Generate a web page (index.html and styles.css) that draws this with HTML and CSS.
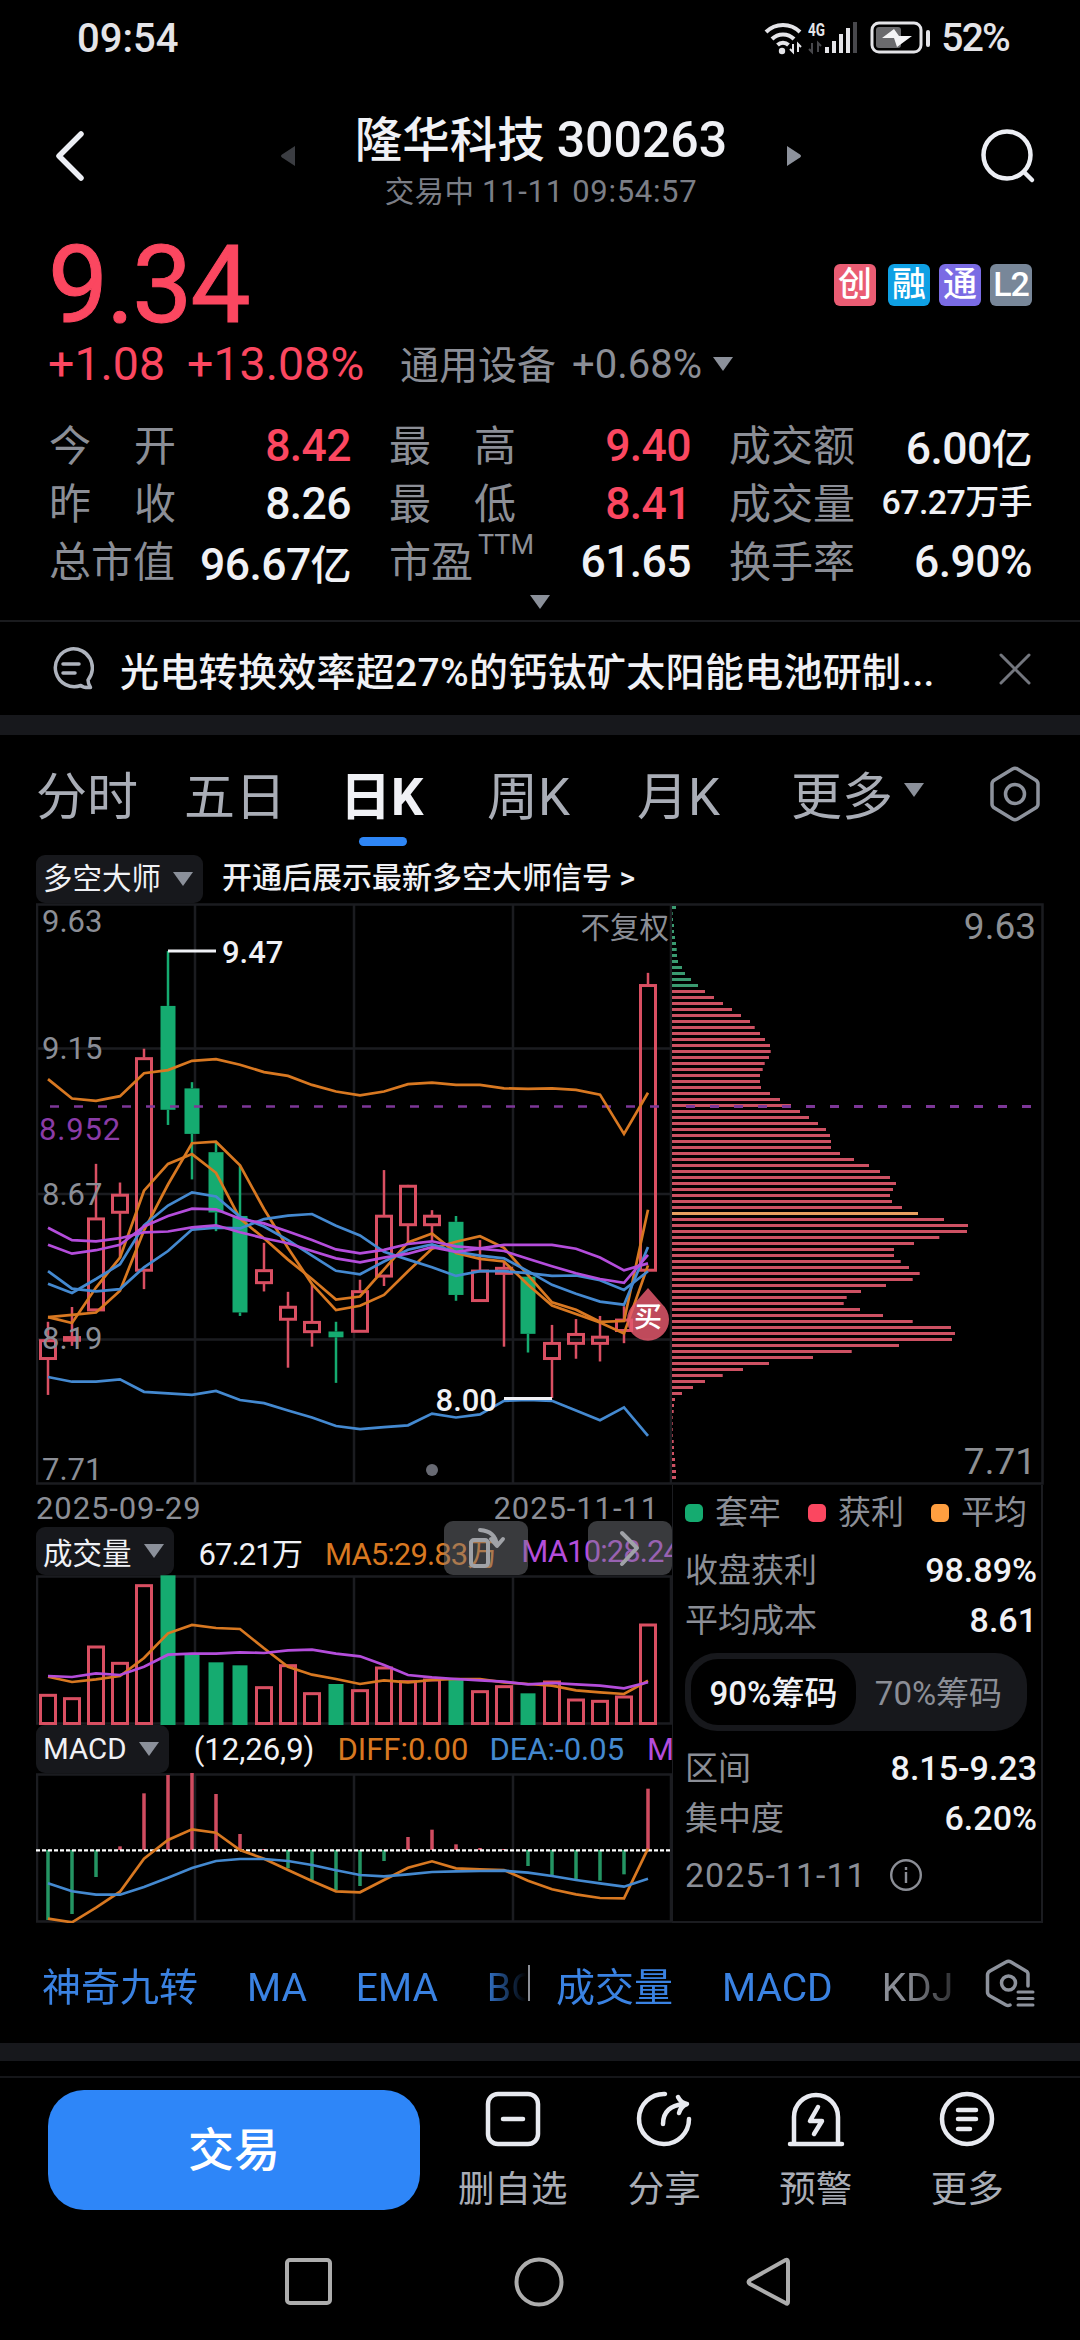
FILE: index.html
```html
<!DOCTYPE html>
<html lang="zh-CN">
<head>
	<meta charset="utf-8">
	<title>隆华科技 300263</title>
	<link rel="stylesheet" href="styles.css">
</head>
<body>

<div class="status">
	<span class="clock">09:54</span>
	<svg class="wifi" width="40" height="34" viewBox="0 0 40 34" fill="none" stroke="#e4e4e8" stroke-width="4">
		<path d="M2 11a24 24 0 0 1 34 0M8 18a15.500 15.500 0 0 1 22 0M13.500 24a8 8 0 0 1 11 0"/>
		<circle cx="18" cy="30" r="3.200" fill="#e4e4e8" stroke="none"/>
		<path d="M29 23v8l-3-3M34 31v-8l3 3" stroke-width="2"/>
	</svg>
	<svg class="signal" width="52" height="34" viewBox="0 0 52 34">
		<text x="0" y="15" class="net" textLength="17" lengthAdjust="spacingAndGlyphs">4G</text>
		<path d="M4 22v9l-3-3M10 31v-9l3 3" stroke="#48484c" stroke-width="2" fill="none"/>
		<g fill="#e4e4e8"><rect x="17" y="26" width="4" height="6"/><rect x="24" y="20" width="4" height="12"/><rect x="31" y="13" width="4" height="19"/><rect x="38" y="7" width="4" height="25"/></g>
		<rect x="45" y="1" width="4" height="31" fill="#48484c"/>
	</svg>
	<svg class="battery" width="62" height="34" viewBox="0 0 62 34">
		<rect x="2" y="2" width="49" height="29" rx="7" fill="none" stroke="#e4e4e8" stroke-width="3"/>
		<rect x="6" y="6" width="25" height="21" rx="3" fill="#6a6a6d"/>
		<path d="M24 8L12 17h12l3 9 15-11H29z" fill="#f4f4f6"/>
		<rect x="56" y="9" width="4" height="17" rx="2" fill="#e4e4e8"/>
	</svg>
	<span class="level">52%</span>
</div>

<div class="header">
	<svg class="back" width="34" height="54" viewBox="0 0 34 54"><path d="M27 5L5 27l22 22" fill="none" stroke="#eceef4" stroke-width="5.500" stroke-linecap="round" stroke-linejoin="round"/></svg>
	<svg class="prev" width="14" height="20" viewBox="0 0 14 20"><path d="M14 0v20L1 11.500q-2-1.500 0-3z" fill="#3b3d42"/></svg>
	<div class="name">
		<div class="title">隆华科技 <span>300263</span></div>
		<div class="time">交易中 <span>11-11 09:54:57</span></div>
	</div>
	<svg class="next" width="14" height="20" viewBox="0 0 14 20"><path d="M0 0v20l13-8.500q2-1.500 0-3z" fill="#8d929c"/></svg>
	<svg class="search" width="56" height="56" viewBox="0 0 56 56" fill="none" stroke="#eceef4" stroke-width="4.500" stroke-linecap="round"><circle cx="27" cy="27" r="23.500"/><path d="M44 44l8 8"/></svg>
</div>

<div class="quote">
	<div class="price">9.34</div>
	<div class="badges">
		<i class="red">创</i><i class="blue">融</i><i class="violet">通</i><i class="slate">L2</i>
	</div>
</div>
<div class="change">
	<span class="up">+1.08</span><span class="up pct">+13.08%</span>
	<span class="sector">通用设备</span><span class="spct">+0.68%</span><b class="tri"></b>
</div>

<div class="stats">
	<div><label><i>今</i><i>开</i></label><b class="up">8.42</b></div>
	<div><label><i>最</i><i>高</i></label><b class="up">9.40</b></div>
	<div><label>成交额</label><b>6.00<u>亿</u></b></div>
	<div><label><i>昨</i><i>收</i></label><b>8.26</b></div>
	<div><label><i>最</i><i>低</i></label><b class="up">8.41</b></div>
	<div><label>成交量</label><b class="small">67.27万手</b></div>
	<div><label>总市值</label><b>96.67<u>亿</u></b></div>
	<div><label class="pe">市盈<sup>TTM</sup></label><b>61.65</b></div>
	<div><label>换手率</label><b>6.90%</b></div>
</div>
<div class="expand"><b class="tri"></b></div>

<div class="news">
	<svg width="44" height="44" viewBox="0 0 44 44" fill="none" stroke="#aeb3bd" stroke-width="3.500" stroke-linecap="round" stroke-linejoin="round"><path d="M21 2a19 19 0 1 0 10 36.500q2.500 2.500 9.500 2-2.500-4-2.500-7.500A19 19 0 0 0 21 2z"/><path d="M13 17h16M13 26h12"/></svg>
	<span>光电转换效率超27%的钙钛矿太阳能电池研制...</span>
	<svg class="close" width="32" height="32" viewBox="0 0 32 32"><path d="M2 2l28 28M30 2L2 30" stroke="#73767e" stroke-width="3" stroke-linecap="round"/></svg>
</div>
<div class="band"></div>

<div class="tabs">
	<span>分时</span><span>五日</span><span class="on">日K</span><span>周K</span><span>月K</span>
	<span>更多<b class="tri"></b></span>
	<svg width="52" height="56" viewBox="0 0 52 56" fill="none" stroke="#8d929c" stroke-width="3.500" stroke-linejoin="round"><path d="M23.500 3q2.500-1.500 5 0l18 11q2.500 1.500 2.500 4v20q0 2.500-2.500 4l-18 11q-2.500 1.500-5 0l-18-11Q3 40.500 3 38V18q0-2.500 2.500-4z"/><circle cx="26" cy="28" r="9.500"/></svg>
</div>

<div class="signalbar">
	<span class="pill">多空大师<b class="tri"></b></span>
	<span class="hint">开通后展示最新多空大师信号 &gt;</span>
</div>

<div class="board">
	<div class="left">
		<svg id="kline" width="636" height="582"></svg>
		<div class="dates"><span>2025-09-29</span><span>2025-11-11</span></div>
		<div class="legend vol">
			<div class="strip">
				<span class="pill">成交量<b class="tri"></b></span>
				<span class="v1">67.21万</span><span class="orange v2">MA5:29.83万</span><span class="purple v3">MA10:28.24</span>
			</div>
			<div class="float rotate">
				<svg width="40" height="42" viewBox="0 0 40 42" fill="none" stroke="#a0a2a7" stroke-width="4" stroke-linecap="round" stroke-linejoin="round"><rect x="5" y="13" width="17" height="26" rx="3"/><path d="M14 3q15 1 17 15M25 12l6 7 6-7"/></svg>
			</div>
			<div class="float">
				<svg width="24" height="40" viewBox="0 0 24 40" fill="none" stroke="#a0a2a7" stroke-width="4" stroke-linecap="round" stroke-linejoin="round"><path d="M4 5l15 15L4 36"/></svg>
			</div>
		</div>
		<svg id="volume" width="636" height="150"></svg>
		<div class="legend">
			<div class="strip">
				<span class="pill">MACD<b class="tri"></b></span>
				<span class="m1">(12,26,9)</span><span class="orange m2">DIFF:0.00</span><span class="azure m3">DEA:-0.05</span><span class="purple m4">M</span>
			</div>
		</div>
		<svg id="macd" width="636" height="150"></svg>
	</div>
	<div class="right">
		<svg id="chips" width="372" height="582"></svg>
		<div class="panel">
			<div class="keys"><span><i class="g"></i>套牢</span><span><i class="r"></i>获利</span><span><i class="y"></i>平均</span></div>
			<div class="row">收盘获利<b>98.89%</b></div>
			<div class="row">平均成本<b>8.61</b></div>
			<div class="toggle"><span class="on">90%筹码</span><span>70%筹码</span></div>
			<div class="row">区间<b>8.15-9.23</b></div>
			<div class="row">集中度<b>6.20%</b></div>
			<div class="day">2025-11-11
				<svg width="34" height="34" viewBox="0 0 34 34" fill="none" stroke="#8b8e96" stroke-width="2.400"><circle cx="17" cy="17" r="14.800"/><path d="M17 14v11M17 9v3"/></svg>
			</div>
		</div>
	</div>
</div>

<div class="studies">
	<div class="group first"><span>神奇九转</span><span>MA</span><span>EMA</span><span>BO</span></div>
	<div class="sep"></div>
	<div class="group second"><span>成交量</span><span>MACD</span><span class="off">KDJ</span></div>
	<svg width="52" height="50" viewBox="0 0 52 50" fill="none" stroke="#8d929c" stroke-width="3.500" stroke-linecap="round" stroke-linejoin="round"><path d="M43 27V15q0-2-2-3L26 3q-2.500-1.500-5 0L5 12q-2.500 1.500-2.500 4v17q0 2.500 2.500 4l16 9q2 1 4 0"/><circle cx="23.500" cy="24" r="7"/><path d="M33 33h15M33 39.500h15M33 46h15" stroke-width="3"/></svg>
</div>
<div class="band thin"></div>

<div class="actions">
	<div class="trade">交易</div>
	<div class="act">
		<svg width="58" height="58" viewBox="0 0 58 58"><rect x="4" y="4" width="50" height="50" rx="10"/><path d="M19 29h20"/></svg>删自选
	</div>
	<div class="act">
		<svg width="58" height="58" viewBox="0 0 58 58"><path d="M30 4A25 25 0 1 0 54 29"/><path d="M28 34q0-18 21-20M43 7q3 6 9 7-6 2-8 9"/></svg>分享
	</div>
	<div class="act">
		<svg width="58" height="58" viewBox="0 0 58 58"><path d="M7 53V27a22 22 0 0 1 44 0v26M3 54h52"/><path d="M31 17l-8 14h12l-8 13"/></svg>预警
	</div>
	<div class="act">
		<svg width="58" height="58" viewBox="0 0 58 58"><circle cx="29" cy="29" r="25"/><path d="M20 20h18M20 29h18M20 39h12"/></svg>更多
	</div>
</div>

<div class="nav">
	<svg width="50" height="54" viewBox="0 0 50 54"><rect x="3" y="5" width="43" height="43" rx="3"/></svg>
	<svg width="54" height="54" viewBox="0 0 54 54"><circle cx="27" cy="27" r="22.500"/></svg>
	<svg width="50" height="54" viewBox="0 0 50 54"><path d="M44 7v40q0 3-2.500 1L6 29q-3-2 0-4L41.500 5q2.500-1 2.500 2z"/></svg>
</div>

<script src="chart.js"></script>
</body>
</html>
```

FILE: chart.js
```js
var RED = '#d94f62', GREEN = '#15ab70', ORANGE = '#d87821', BLUE = '#4489d0', PURPLE = '#b44ddb', GRID = '#1b1c20';

// high, body top, body bottom, low, rising
var candles = [
	[1110,1156,1207,1298,1],[1072,1148,1160,1172,1],[704,843,1082,1082,1],[752,782,831,945,1],
	[408,431,980,1026,1],[157,298,565,604,0],[494,510,627,744,0],[650,674,829,877,0],
	[708,838,1086,1095,0],[907,976,1012,1032,1],[1033,1070,1106,1228,1],[1012,1109,1138,1174,1],
	[1110,1135,1150,1267,0],[1002,1030,1137,1137,1],[720,836,995,1018,1],[758,759,863,905,1],
	[823,836,863,905,1],[838,853,1041,1056,0],[900,977,1058,1058,1],[955,970,988,1174,1],
	[994,994,1141,1189,0],[1118,1163,1207,1306,1],[1103,1140,1168,1205,1],[1095,1147,1168,1212,1],
	[1070,1103,1135,1165,1],[213,243,980,980,1]
];

var lines = [
	[ORANGE, [486,536,542,530,471,463,439,435,449,468,478,501,518,528,518,499,495,501,501,510,511,510,514,526,627,521]],
	[BLUE, [1252,1264,1264,1258,1290,1294,1298,1288,1311,1319,1338,1356,1378,1386,1381,1376,1346,1356,1348,1313,1311,1313,1338,1363,1330,1403]],
	[ORANGE, [1098,1092,1086,1030,875,757,651,647,708,820,920,1013,1080,1069,1041,980,922,904,890,920,990,1060,1079,1110,1108,822]],
	[ORANGE, [1098,1113,1022,945,773,704,679,727,845,895,950,1000,1053,1045,975,906,883,933,948,955,1015,1068,1090,1112,1140,965]],
	[BLUE, [980,1025,1032,1026,970,928,873,868,870,846,837,833,863,888,930,950,970,992,980,980,985,992,991,1003,1028,980]],
	[BLUE, [1012,1036,1000,962,862,811,777,788,840,865,900,940,979,988,955,925,911,930,940,947,980,1015,1038,1058,1066,918]],
	[PURPLE, [868,900,903,895,880,878,867,862,880,895,908,928,947,957,945,935,918,930,922,928,948,967,985,1000,1010,938]],
	[PURPLE, [912,935,926,912,865,838,819,821,845,857,878,900,924,934,925,910,903,916,921,912,912,912,922,945,978,960]]
];

var vol = [643,653,498,547,314,286,524,547,556,620,554,638,612,629,561,602,597,598,632,617,640,603,657,661,648,432];
var vol5 = [590,606,598,588,534,460,435,444,447,505,560,584,597,612,601,607,600,597,597,607,612,617,631,637,642,602];
var vol10 = [588,591,580,585,560,524,521,521,517,519,511,509,521,529,555,585,592,597,601,605,613,609,613,617,625,607];

var bars = [1320,1302,1191,1099,940,885,879,942,1062,1107,1165,1200,1230,1218,1143,1071,1049,1093,1104,1107,1158,1188,1197,1202,1183,926];
var diff = [1316,1327,1283,1235,1136,1080,1048,1058,1110,1136,1170,1203,1234,1237,1200,1163,1144,1165,1168,1170,1202,1228,1243,1254,1255,1106];
var dea = [1210,1234,1244,1244,1221,1193,1164,1143,1137,1137,1143,1155,1171,1185,1189,1183,1176,1174,1173,1172,1178,1188,1200,1210,1220,1196];

var chips = [48,38,39,42,42,45,48,50,51,54,66,75,93,114,135,162,189,216,243,270,284,300,315,330,332,327,314,308,300,300,303,330,
	360,393,420,447,474,498,510,513,513,540,582,627,660,690,708,699,690,696,726,774,852,924,921,838,762,702,702,722,747,779,758,678,
	603,560,551,600,669,758,873,885,876,717,575,459,327,249,188,135,99,66,45,42,41,38,38,38,38,41,42,42,45,46,48,48];

function x(i) { return 12 + 24 * i; }
function py(v) { return v * 0.389 - 13; }
function vy(v) { return v / 3 - 95; }
function my(v) { return v / 3 - 293; }

function rect(x, y, w, h, fill, extra) {
	return '<rect x="' + x + '" y="' + y + '" width="' + w + '" height="' + h + '" fill="' + fill + '" ' + (extra || '') + '/>';
}
function line(x1, y1, x2, y2, color, w, extra) {
	return '<path d="M' + x1 + ' ' + y1 + 'L' + x2 + ' ' + y2 + '" stroke="' + color + '" stroke-width="' + w + '" ' + (extra || '') + '/>';
}
function poly(data, scale, color) {
	var p = data.map(function (v, i) { return x(i) + ',' + scale(v).toFixed(1); });
	return '<polyline points="' + p.join(' ') + '" fill="none" stroke="' + color + '" stroke-width="2.7"/>';
}
function text(x, y, s, cls, anchor) {
	return '<text x="' + x + '" y="' + y + '" class="' + cls + '" text-anchor="' + (anchor || 'start') + '">' + s + '</text>';
}
function frame(h) {
	var s = rect(1, 1.500, 634, h - 3, 'none', 'stroke="' + GRID + '" stroke-width="2.5"');
	[159, 318, 477].forEach(function (gx) { s += line(gx, 1, gx, h - 2, GRID, 2.5); });
	return s;
}

// candles
var s = frame(582);
[145.500, 291, 436.500].forEach(function (gy) { s += line(0, gy, 636, gy, GRID, 2.5); });
candles.forEach(function (c, i) {
	var t = py(c[1]), b = py(c[2]), col = c[4] ? RED : GREEN;
	s += line(x(i), py(c[0]), x(i), t, col, 2.5) + line(x(i), b, x(i), py(c[3]), col, 2.5);
	if (c[4]) s += rect(x(i) - 7.5, t + 1, 15, Math.max(b - t - 2, 2), 'none', 'stroke="' + RED + '" stroke-width="3"');
	else s += rect(x(i) - 7.5, t, 15, b - t, GREEN);
});
s += line(14, 203.500, 636, 203.500, '#7d3798', 2.5, 'stroke-dasharray="9 15"');
lines.forEach(function (l) { s += poly(l[1], py, l[0]); });
s += line(x(5), py(157), 180, py(157), '#f0f1f5', 3) + text(186, 60, '9.47', 'mark');
s += line(468, py(1307), x(21), py(1307), '#f0f1f5', 3) + text(461, 508, '8.00', 'mark', 'end');
s += text(6, 29, '9.63', 'axis') + text(6, 156, '9.15', 'axis') + text(6, 302, '8.67', 'axis') + text(6, 446, '8.19', 'axis') + text(6, 577, '7.71', 'axis');
s += text(3, 237, '8.952', 'axis cost') + text(633, 35, '不复权', 'adj', 'end');
s += '<circle cx="396" cy="567" r="6" fill="#686a73"/>';
s += '<path d="M612 385L626 401a21 21 0 1 1-28 0z" fill="#e3586c" fill-opacity=".84"/>' + text(612, 424, '买', 'buy', 'middle');
document.getElementById('kline').innerHTML = s;

// volume
s = frame(150);
vol.forEach(function (v, i) {
	var t = vy(v);
	if (candles[i][4]) s += rect(x(i) - 7.5, t + 1, 15, 147.500 - t, 'none', 'stroke="' + RED + '" stroke-width="3"');
	else s += rect(x(i) - 7.5, t, 15, 150 - t, GREEN);
});
s += poly(vol5, vy, ORANGE) + poly(vol10, vy, PURPLE);
document.getElementById('volume').innerHTML = s;

// macd
s = frame(150);
bars.forEach(function (v, i) { s += line(x(i), 77, x(i), my(v), v < 1110 ? '#d04c60' : '#249563', 3.5); });
s += line(0, 77.300, 636, 77.300, '#fff', 2.2, 'stroke-dasharray="4 2"');
s += poly(diff, my, ORANGE) + poly(dea, my, BLUE);
document.getElementById('macd').innerHTML = s;

// cost distribution
s = rect(-2, 1.500, 372.500, 579, 'none', 'stroke="' + GRID + '" stroke-width="2.5"');
chips.forEach(function (v, i) {
	s += rect(0, 3 + 6 * i, ((v - 36) / 3).toFixed(1), 3, i < 14 ? '#3a9a70' : i == 51 ? '#e8a060' : '#cd5163');
});
s += line(14, 203.500, 364, 203.500, '#7d3798', 3, 'stroke-dasharray="9 15"');
s += text(364, 36, '9.63', 'big', 'end') + text(364, 571, '7.71', 'big', 'end');
document.getElementById('chips').innerHTML = s;
```

FILE: styles.css
```css
* { box-sizing: border-box; }
body {
	margin: 0;
	width: 1080px;
	height: 2340px;
	overflow: hidden;
	background: #000;
	color: #f0f1f5;
	font-family: Roboto, "Noto Sans CJK SC", sans-serif;
	white-space: nowrap;
}
i, u { font-style: normal; text-decoration: none; }
svg { display: block; flex: none; }
.up { color: #fb4760; }
.tri {
	display: inline-block;
	border: 10.5px solid transparent;
	border-top: 14px solid #8b909a;
	border-bottom: 0;
}
.orange { color: #d87821; }
.purple { color: #b44ddb; }
.azure { color: #4489d0; }

/* status bar */
.status { display: flex; align-items: center; height: 76px; padding: 0 71px 0 77px; color: #e4e4e8; }
.clock { flex: 1; font-size: 40px; font-weight: 500; }
.signal { margin-left: 4px; }
.net { font-size: 18px; font-weight: 700; fill: #e4e4e8; }
.battery { margin: 0 9px 0 10px; }
.level { font-size: 39px; font-weight: 500; letter-spacing: -1.8px; }

/* title */
.header { display: flex; align-items: center; height: 160px; padding: 0 44px 0 54px; }
.prev { margin-left: 193px; }
.name { width: 492px; padding-top: 8px; text-align: center; }
.title { font-size: 47.500px; font-weight: 500; line-height: 62px; }
.title span { font-size: 50px; }
.time { font-size: 29.500px; line-height: 40px; color: #7b7e86; letter-spacing: .4px; }
.time span { font-size: 31px; letter-spacing: .7px; }
.search { margin-left: auto; }

/* price */
.quote { display: flex; justify-content: space-between; height: 94px; padding: 0 48px; }
.price { font-size: 107px; line-height: 100px; color: #fb4760; letter-spacing: -2px; -webkit-text-stroke: 1px #fb4760; }
.badges { display: flex; gap: 9px; padding-top: 28px; }
.badges i { width: 42px; height: 42px; border-radius: 6px; font-size: 34px; line-height: 40px; text-align: center; font-weight: 500; color: #fff; }
.badges .red { background: #ea5c73; margin-right: 3px; }
.badges .blue { background: #0fa0e4; }
.badges .violet { background: #7a6be4; }
.badges .slate { background: #788799; letter-spacing: -1px; }
.change { display: flex; align-items: center; height: 68px; padding-left: 48px; font-size: 46.500px; }
.change .up { width: 139px; }
.change .pct { width: 213px; }
.sector { margin-top: -4px; font-size: 39px; color: #8b8e96; }
.spct { margin-left: 16px; font-size: 40px; color: #8b8e96; }
.change .tri { margin: 0 0 0 11px; }

.stats { display: grid; grid-template-columns: 302px 302px 303px; column-gap: 38px; grid-auto-rows: 58px; padding: 17px 48px 0 49px; }
.stats div { display: flex; justify-content: space-between; align-items: center; }
.stats label { display: flex; justify-content: space-between; width: 127px; margin-top: -4px; font-size: 42px; color: #8b8e96; }
.stats .pe { justify-content: flex-start; }
.stats sup { font-size: 27px; line-height: 28px; margin: 3px 0 0 5px; }
.stats b { margin-top: 3px; font-size: 44.500px; font-weight: 500; letter-spacing: -.6px; }
.stats u { font-size: 41px; }
.stats .small { font-size: 34px; margin-top: -6px; }
.expand { display: flex; justify-content: center; height: 31px; padding-top: 6px; }

.news { display: flex; align-items: center; height: 95px; padding: 0 49px 0 50px; border-top: 2px solid #1a1b1e; font-size: 39px; }
.news span { flex: 1; padding-left: 26px; font-weight: 500; letter-spacing: .3px; }
.band { height: 20px; background: #17181c; }

/* period tabs */
.tabs {
	display: grid;
	grid-template-columns: 148px 156px 147px 150px 154px 198px 52px;
	height: 120px;
	padding: 24px 0 0 36px;
	font-size: 51px;
	line-height: 78px;
	color: #a9adb6;
}
.tabs .on { position: relative; color: #f0f1f5; font-weight: 700; }
.tabs .on::after { content: ""; position: absolute; left: 19px; top: 78px; width: 48px; height: 9px; border-radius: 5px; background: #2e86f6; }
.tabs .tri { margin-left: 11px; vertical-align: 18px; }
.tabs svg { margin-top: 7px; }

.pill { display: flex; align-items: center; height: 48px; padding: 0 10px 0 7px; border-radius: 9px; background: #17181c; font-size: 29.500px; color: #f0f1f5; }
.pill .tri { margin-left: 12px; }
.signalbar { display: flex; align-items: center; height: 48px; padding-left: 36px; font-size: 30px; line-height: 40px; }
.hint { margin: -3px 0 0 19px; font-weight: 500; }

/* charts */
.board { display: flex; margin-left: 36px; }
.left { width: 636px; }
.right { width: 372px; }
.axis { font-size: 31px; fill: #8b8e96; }
.cost { fill: #8a3ba6; letter-spacing: .8px; }
.mark { font-size: 31px; font-weight: 500; fill: #f0f1f5; }
.adj { font-size: 29.500px; fill: #8b8e96; }
.big { font-size: 37px; fill: #8d8f93; }
.buy { font-size: 28px; font-weight: 500; fill: #fff; }
.dates { display: flex; justify-content: space-between; height: 42px; padding-right: 13px; font-size: 31px; line-height: 48px; letter-spacing: .9px; color: #8b8e96; }
.legend { position: relative; height: 48px; font-size: 31px; }
.strip { display: flex; align-items: center; overflow: hidden; }
.strip span { flex: none; }
.vol .strip { letter-spacing: -.9px; }
.vol .pill { letter-spacing: 0; }
.v1 { margin-left: 25px; }
.v2 { margin-left: 23px; }
.v3 { margin-left: 24px; }
.m1 { margin-left: 25px; }
.m2 { margin-left: 23px; }
.m3 { margin-left: 21px; }
.m4 { margin-left: 23px; }
.float { position: absolute; right: 0; top: -6px; width: 84px; height: 54px; border-radius: 9px; background: rgba(122, 124, 130, .47); display: flex; align-items: center; justify-content: center; }
.rotate { right: 144px; }

.panel { height: 438px; padding: 10px 6px 0 12px; border: solid #1b1c20; border-width: 0 2.500px 2.500px 1px; margin-right: 1px; font-size: 33px; color: #8b8e96; }
.keys { display: flex; height: 48px; line-height: 36px; }
.keys span { display: flex; flex: none; align-items: center; width: 123px; }
.keys i { width: 18px; height: 18px; border-radius: 5px; margin: 0 12px 0 0; }
.keys span { height: 36px; }
.g { background: #15ab70; }
.r { background: #fb4760; }
.y { background: #ff9f40; }
.row { display: flex; justify-content: space-between; align-items: center; height: 50px; }
.row b { margin: 3px -2px 0 0; font-size: 34px; font-weight: 500; color: #f0f1f5; }
.toggle { display: flex; width: 342px; height: 78px; margin: 10px 0 10px; padding: 6px; border-radius: 32px; background: #17181c; font-size: 33px; line-height: 69px; }
.toggle span { width: 165px; height: 66px; text-align: center; }
.toggle .on { border-radius: 27px; background: #000; color: #f0f1f5; font-weight: 500; }
.day { display: flex; align-items: center; height: 68px; font-size: 34px; letter-spacing: 1px; }
.day svg { margin-left: 22px; }

/* indicator picker */
.studies { display: flex; align-items: center; height: 120px; padding: 0 43px 0 42px; font-size: 39px; line-height: 60px; color: #3a82e2; }
.group { display: flex; gap: 49px; overflow: hidden; margin-top: 9px; }
.first { width: 484px; -webkit-mask-image: linear-gradient(90deg, #000 440px, transparent 484px); }
.sep { width: 2px; height: 36px; margin-left: 2px; background: #8b8e96; }
.second { width: 403px; margin-left: 26px; -webkit-mask-image: linear-gradient(90deg, #000 350px, transparent 420px); }
.studies svg { margin: 2px 0 0 auto; }
.off { color: #8b8e96; }
.thin { height: 18px; }

/* bottom bar */
.actions { display: flex; height: 148px; margin-top: 15px; padding: 12px 0 0 48px; border-top: 2px solid #151619; }
.trade { width: 372px; height: 120px; margin-right: 17px; border-radius: 36px; background: #2e86f8; font-size: 46px; line-height: 120px; font-weight: 500; text-align: center; color: #fff; }
.act { display: flex; flex-direction: column; align-items: center; width: 151.500px; font-size: 36.500px; line-height: 60px; color: #a9adb6; }
.act svg { margin-bottom: 12px; fill: none; stroke: #e8eaf0; stroke-width: 4.500; stroke-linecap: round; stroke-linejoin: round; }
.nav { display: flex; justify-content: space-between; align-items: center; padding: 31px 286px 0 284px; }
.nav svg { fill: none; stroke: #adadad; stroke-width: 4; }
```
